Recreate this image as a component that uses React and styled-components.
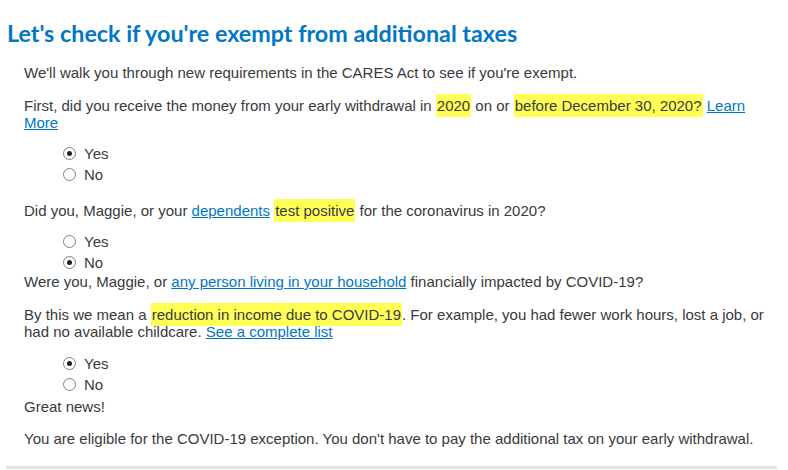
import React from 'react';
import styled, { createGlobalStyle } from 'styled-components';

const Global = createGlobalStyle`
  body {
    margin: 0;
    background: #fff;
    font-family: "Liberation Sans", Arial, sans-serif;
    color: #393a3d;
  }
`;

const Page = styled.div`
  width: 771px;
  padding: 18px 0 0 6px;
`;

const Title = styled.h1`
  margin: 0 0 0 1px;
  font-family: Lato, "Open Sans", sans-serif;
  font-weight: 700;
  font-size: 23.3px;
  line-height: 30px;
  color: #0077c5;
`;

const Body = styled.div`
  padding: 16px 0 19px 18px;
  width: 744px;
  font-size: 15px;
  line-height: 17px;
`;

const P = styled.p`
  margin: 0 0 ${p => p.$mb ?? 16}px;
`;

const Mark = styled.span`
  background: #ffff55;
  padding: 3px 1px;
`;

const Link = styled.a`
  color: #0077c5;
  text-decoration: underline;
  cursor: pointer;
`;

const Group = styled.div`
  margin: ${p => p.$mt ?? 12}px 0 ${p => p.$mb ?? 0}px 39px;
  display: flex;
  flex-direction: column;
`;

const Option = styled.label`
  display: flex;
  align-items: center;
  gap: 8px;
  height: 21px;
`;

const Dot = styled.span`
  width: 11px;
  height: 11px;
  border: 1px solid #808080;
  border-radius: 50%;
  display: flex;
  align-items: center;
  justify-content: center;
  &::after {
    content: '';
    width: 5px;
    height: 5px;
    border-radius: 50%;
    background: ${p => (p.$on ? '#222' : 'transparent')};
  }
`;

const Footer = styled.div`
  border-top: 3px solid #e3e3e3;
  height: 10px;
`;

const Radios = ({ value, mt, mb }) => (
  <Group $mt={mt} $mb={mb}>
    <Option><Dot $on={value === 'yes'} />Yes</Option>
    <Option><Dot $on={value === 'no'} />No</Option>
  </Group>
);

export default function App() {
  return (
    <Page>
      <Global />
      <Title>Let's check if you're exempt from additional taxes</Title>
      <Body>
        <P>We'll walk you through new requirements in the CARES Act to see if you're exempt.</P>
        <P $mb={0}>
          First, did you receive the money from your early withdrawal in <Mark>2020</Mark> on or{' '}
          <Mark>before December 30, 2020?</Mark> <Link>Learn More</Link>
        </P>
        <Radios value="yes" mt={12} mb={17} />
        <P $mb={0}>
          Did you, Maggie, or your <Link>dependents</Link> <Mark>test positive</Mark> for the coronavirus in 2020?
        </P>
        <Radios value="no" mt={12} mb={0} />
        <P>
          Were you, Maggie, or <Link>any person living in your household</Link> financially impacted by COVID-19?
        </P>
        <P $mb={0}>
          By this we mean a <Mark>reduction in income due to COVID-19</Mark>. For example, you had fewer work hours, lost a job, or had no available childcare. <Link>See a complete list</Link>
        </P>
        <Radios value="yes" mt={13} mb={3} />
        <P $mb={15}>Great news!</P>
        <P $mb={0}>You are eligible for the COVID-19 exception. You don't have to pay the additional tax on your early withdrawal.</P>
      </Body>
      <Footer />
    </Page>
  );
}
